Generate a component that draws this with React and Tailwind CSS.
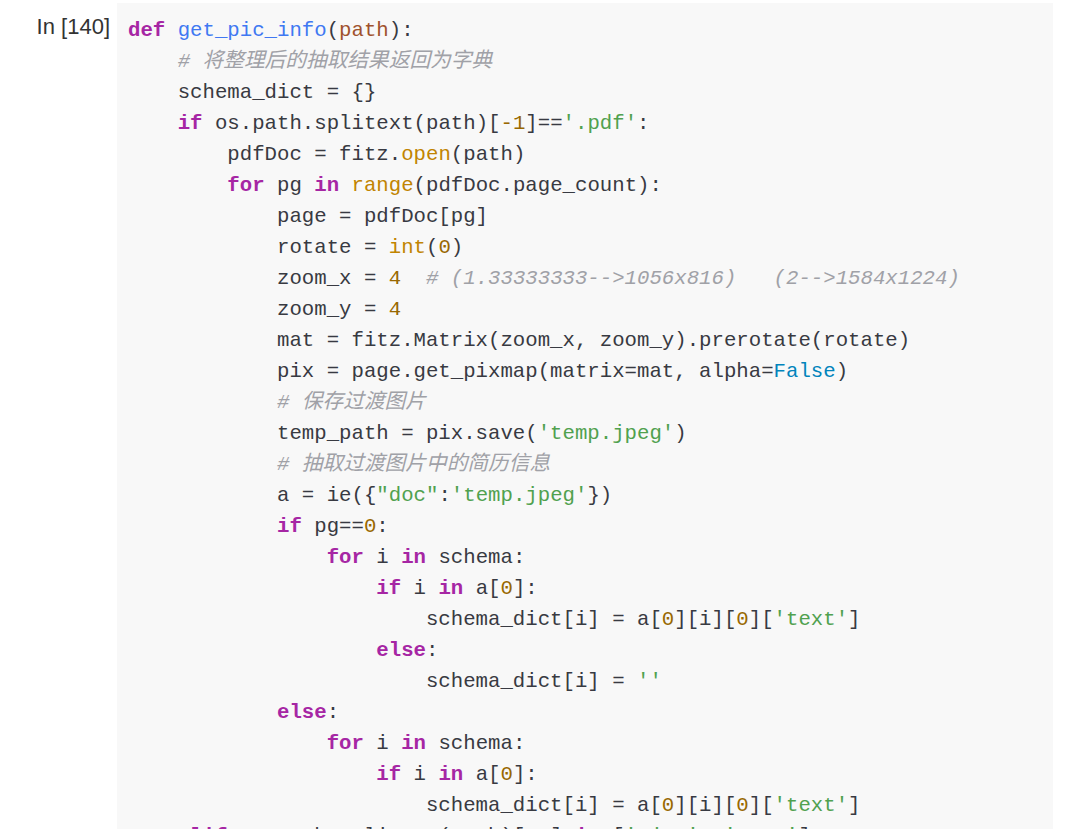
const K = ({ children }) => <span className="font-bold text-[#a626a4]">{children}</span>;
const S = ({ children }) => <span className="text-[#50a14f]">{children}</span>;
const N = ({ children }) => <span className="text-[#986801]">{children}</span>;
const B = ({ children }) => <span className="text-[#c18401]">{children}</span>;
const F = ({ children }) => <span className="text-[#4078f2]">{children}</span>;
const P = ({ children }) => <span className="text-[#a0522d]">{children}</span>;
const T = ({ children }) => <span className="text-[#0184bc]">{children}</span>;
const C = ({ children }) => <span className="italic text-[#a0a1a7]">{children}</span>;

const ind = (n) => " ".repeat(n);

const lines = [
  <><K>def</K> <F>get_pic_info</F>(<P>path</P>):</>,
  <>{ind(4)}<C># 将整理后的抽取结果返回为字典</C></>,
  <>{ind(4)}schema_dict = {"{}"}</>,
  <>{ind(4)}<K>if</K> os.path.splitext(path)[<N>-1</N>]==<S>'.pdf'</S>:</>,
  <>{ind(8)}pdfDoc = fitz.<B>open</B>(path)</>,
  <>{ind(8)}<K>for</K> pg <K>in</K> <B>range</B>(pdfDoc.page_count):</>,
  <>{ind(12)}page = pdfDoc[pg]</>,
  <>{ind(12)}rotate = <B>int</B>(<N>0</N>)</>,
  <>{ind(12)}zoom_x = <N>4</N>  <C># (1.33333333--&gt;1056x816)   (2--&gt;1584x1224)</C></>,
  <>{ind(12)}zoom_y = <N>4</N></>,
  <>{ind(12)}mat = fitz.Matrix(zoom_x, zoom_y).prerotate(rotate)</>,
  <>{ind(12)}pix = page.get_pixmap(matrix=mat, alpha=<T>False</T>)</>,
  <>{ind(12)}<C># 保存过渡图片</C></>,
  <>{ind(12)}temp_path = pix.save(<S>'temp.jpeg'</S>)</>,
  <>{ind(12)}<C># 抽取过渡图片中的简历信息</C></>,
  <>{ind(12)}a = ie({"{"}<S>"doc"</S>:<S>'temp.jpeg'</S>{"})"}</>,
  <>{ind(12)}<K>if</K> pg==<N>0</N>:</>,
  <>{ind(16)}<K>for</K> i <K>in</K> schema:</>,
  <>{ind(20)}<K>if</K> i <K>in</K> a[<N>0</N>]:</>,
  <>{ind(24)}schema_dict[i] = a[<N>0</N>][i][<N>0</N>][<S>'text'</S>]</>,
  <>{ind(20)}<K>else</K>:</>,
  <>{ind(24)}schema_dict[i] = <S>''</S></>,
  <>{ind(12)}<K>else</K>:</>,
  <>{ind(16)}<K>for</K> i <K>in</K> schema:</>,
  <>{ind(20)}<K>if</K> i <K>in</K> a[<N>0</N>]:</>,
  <>{ind(24)}schema_dict[i] = a[<N>0</N>][i][<N>0</N>][<S>'text'</S>]</>,
  <>{ind(4)}<K>elif</K> os.path.splitext(path)[<N>-1</N>] <K>in</K> [<S>'.jpg'</S>, <S>'.png'</S>]:</>,
];

export default function App() {
  return (
    <div className="flex w-[1080px] bg-white pt-[3px] pr-[27px]">
      <div className="w-[117px] shrink-0 pr-[7px] pt-[10px] text-right font-['Liberation_Sans',Arial,sans-serif] text-[22px] leading-[28px] text-[#333333]">
        In [140]
      </div>
      <div className="flex-1 bg-[#f8f8f8] pl-[11px] pt-[12px] pb-[10px]">
        <pre className="m-0 font-['Liberation_Mono','Noto_Sans_CJK_SC',monospace] text-[20.7px] leading-[31px] text-[#383a42]">
          {lines.map((l, i) => (
            <div key={i} className="h-[31px] whitespace-pre">
              {l}
            </div>
          ))}
        </pre>
      </div>
    </div>
  );
}
